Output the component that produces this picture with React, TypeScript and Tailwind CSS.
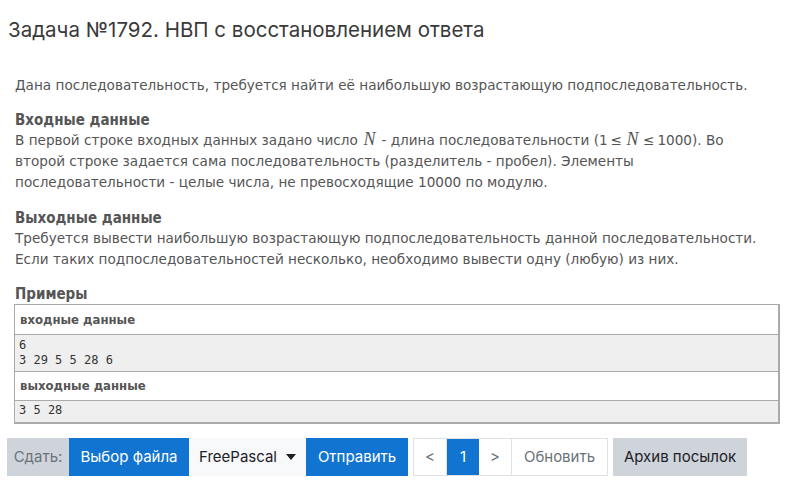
import React from "react";

const body = { fontFamily: '"DejaVu Sans", Verdana, sans-serif' };
const head = { fontFamily: '"DejaVu Sans Condensed", "DejaVu Sans", Verdana, sans-serif' };
const ui = { fontFamily: 'Inter, "Noto Sans", sans-serif' };
const mono = { fontFamily: '"DejaVu Sans Mono", monospace' };

function MathN() {
  return <span style={{ fontFamily: '"Liberation Serif", serif' }} className="italic text-[18px] leading-[18px] text-[#555] mx-[1.5px]">N</span>;
}

function Le() {
  return <span className="mx-[3px]">≤</span>;
}

export default function App() {
  return (
    <div className="w-[806px] h-[488px] bg-white overflow-hidden">
      <h1 style={ui} className="pl-[8px] pt-[14px] text-[20.5px] leading-[32px] text-[#3a3a3a] font-normal">
        Задача №1792. НВП с восстановлением ответа
      </h1>

      <div style={body} className="pl-[15px] pr-[42px] text-[#555] text-[13.6px]">
        <p className="mt-[29px] leading-[21px]">
          Дана последовательность, требуется найти её наибольшую возрастающую подпоследовательность.
        </p>

        <h3 style={head} className="mt-[14px] font-bold text-[15px] leading-[20px]">Входные данные</h3>
        <p className="leading-[21px]">
          В первой строке входных данных задано число <MathN /> - длина последовательности (1<Le /><MathN /><Le />1000). Во второй строке задается сама последовательность (разделитель - пробел). Элементы последовательности - целые числа, не превосходящие 10000 по модулю.
        </p>

        <h3 style={head} className="mt-[15px] font-bold text-[15px] leading-[20px]">Выходные данные</h3>
        <p className="leading-[21px]">
          Требуется вывести наибольшую возрастающую подпоследовательность данной последовательности. Если таких подпоследовательностей несколько, необходимо вывести одну (любую) из них.
        </p>

        <h3 style={head} className="mt-[14px] font-bold text-[15px] leading-[20px]">Примеры</h3>
      </div>

      <div className="ml-[14px] w-[766px] border border-[#aaa] border-b-2 border-r-2 text-[#333]">
        <div style={head} className="h-[30px] flex items-center pl-[5px] font-bold text-[13px] text-[#555] border-b border-[#aaa]">
          входные данные
        </div>
        <div style={mono} className="h-[37px] bg-[#efefef] pl-[4px] pt-[3px] text-[12px] leading-[15px] border-b border-[#aaa]">
          <div>6</div>
          <div>3 29 5 5 28 6</div>
        </div>
        <div style={head} className="h-[29px] flex items-center pl-[5px] font-bold text-[13px] text-[#555] border-b border-[#aaa]">
          выходные данные
        </div>
        <div style={mono} className="h-[21px] bg-[#efefef] pl-[4px] pt-[2px] text-[12px] leading-[15px]">
          3 5 28
        </div>
      </div>

      <div style={ui} className="mt-[14px] ml-[7px] flex items-center h-[38px] text-[15px]">
        <div className="h-full w-[62px] bg-[#ced4da] text-[#6a737b] flex items-center justify-center">Сдать:</div>
        <div className="h-full w-[120px] bg-[#1174d0] text-white flex items-center justify-center">Выбор файла</div>
        <div className="h-full w-[117px] bg-[#f8f9fa] text-[#1d2125] flex items-center justify-center gap-[9px]">
          FreePascal
          <svg width="10" height="6" viewBox="0 0 10 6"><path d="M0 0h10L5 6z" fill="#1d2125" /></svg>
        </div>
        <div className="h-full w-[102px] bg-[#1174d0] text-white flex items-center justify-center">Отправить</div>
        <div className="ml-[5px] h-full flex border border-[#dee2e6]">
          <div className="w-[33px] flex items-center justify-center text-[#6a737b] border-r border-[#dee2e6]">&lt;</div>
          <div className="w-[32px] flex items-center justify-center bg-[#1174d0] text-white">1</div>
          <div className="w-[33px] flex items-center justify-center text-[#6a737b] border-r border-[#dee2e6]">&gt;</div>
          <div className="w-[95px] flex items-center justify-center text-[#6a737b]">Обновить</div>
        </div>
        <div className="ml-[5px] h-full w-[134px] bg-[#ced4da] text-[#1d2125] flex items-center justify-center">Архив посылок</div>
      </div>
    </div>
  );
}
